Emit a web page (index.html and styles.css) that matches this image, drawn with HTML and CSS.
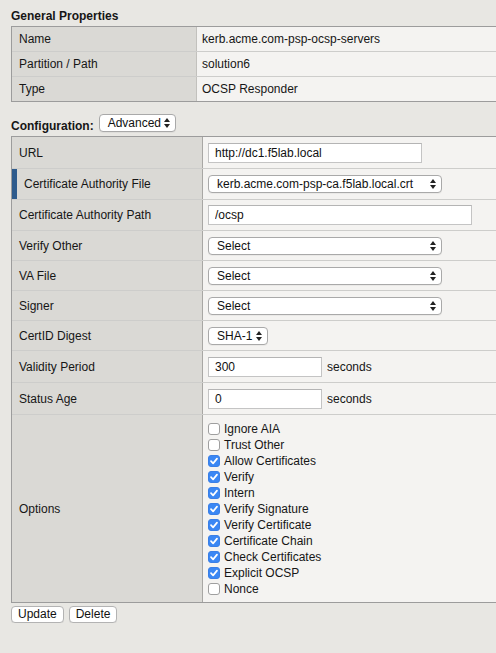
FILE: index.html
```html
<!DOCTYPE html>
<html>
<head>
<meta charset="utf-8">
<link rel="stylesheet" href="styles.css">
</head>
<body>
<div class="page">
  <h2 class="title">General Properties</h2>
  <div class="props">
    <div class="prow"><div class="plabel">Name</div><div class="pval">kerb.acme.com-psp-ocsp-servers</div></div>
    <div class="prow"><div class="plabel">Partition / Path</div><div class="pval">solution6</div></div>
    <div class="prow"><div class="plabel">Type</div><div class="pval">OCSP Responder</div></div>
  </div>

  <div class="config">
    <span class="config-label">Configuration:</span>
    <div class="select sel-adv"><span class="sel-text">Advanced</span><svg class="arr" width="6" height="10" viewBox="0 0 6 10"><polygon points="0,4 3,0 6,4"/><polygon points="0,6 3,10 6,6"/></svg></div>
  </div>

  <div class="form">
    <div class="frow h-url">
      <div class="flabel">URL</div>
      <div class="fval"><input class="input w-url" type="text" value="http://dc1.f5lab.local"></div>
    </div>
    <div class="frow h-30">
      <div class="flabel marked">Certificate Authority File</div>
      <div class="fval"><div class="select w-sel"><span class="sel-text">kerb.acme.com-psp-ca.f5lab.local.crt</span><svg class="arr" width="6" height="10" viewBox="0 0 6 10"><polygon points="0,4 3,0 6,4"/><polygon points="0,6 3,10 6,6"/></svg></div></div>
    </div>
    <div class="frow h-30">
      <div class="flabel">Certificate Authority Path</div>
      <div class="fval"><input class="input w-path" type="text" value="/ocsp"></div>
    </div>
    <div class="frow h-29">
      <div class="flabel">Verify Other</div>
      <div class="fval"><div class="select w-sel"><span class="sel-text">Select</span><svg class="arr" width="6" height="10" viewBox="0 0 6 10"><polygon points="0,4 3,0 6,4"/><polygon points="0,6 3,10 6,6"/></svg></div></div>
    </div>
    <div class="frow h-29">
      <div class="flabel">VA File</div>
      <div class="fval"><div class="select w-sel"><span class="sel-text">Select</span><svg class="arr" width="6" height="10" viewBox="0 0 6 10"><polygon points="0,4 3,0 6,4"/><polygon points="0,6 3,10 6,6"/></svg></div></div>
    </div>
    <div class="frow h-29">
      <div class="flabel">Signer</div>
      <div class="fval"><div class="select w-sel"><span class="sel-text">Select</span><svg class="arr" width="6" height="10" viewBox="0 0 6 10"><polygon points="0,4 3,0 6,4"/><polygon points="0,6 3,10 6,6"/></svg></div></div>
    </div>
    <div class="frow h-29">
      <div class="flabel">CertID Digest</div>
      <div class="fval"><div class="select w-sha"><span class="sel-text">SHA-1</span><svg class="arr" width="6" height="10" viewBox="0 0 6 10"><polygon points="0,4 3,0 6,4"/><polygon points="0,6 3,10 6,6"/></svg></div></div>
    </div>
    <div class="frow h-31">
      <div class="flabel">Validity Period</div>
      <div class="fval"><input class="input w-num" type="text" value="300"><span class="unit">seconds</span></div>
    </div>
    <div class="frow h-31">
      <div class="flabel">Status Age</div>
      <div class="fval"><input class="input w-num" type="text" value="0"><span class="unit">seconds</span></div>
    </div>
    <div class="frow h-opts">
      <div class="flabel">Options</div>
      <div class="fval">
        <div class="checks">
          <div class="check"><span class="cb"></span>Ignore AIA</div>
          <div class="check"><span class="cb"></span>Trust Other</div>
          <div class="check"><span class="cb on"><svg width="12" height="12" viewBox="0 0 12 12"><path d="M3 6.2 L5.1 8.4 L9 3.6"/></svg></span>Allow Certificates</div>
          <div class="check"><span class="cb on"><svg width="12" height="12" viewBox="0 0 12 12"><path d="M3 6.2 L5.1 8.4 L9 3.6"/></svg></span>Verify</div>
          <div class="check"><span class="cb on"><svg width="12" height="12" viewBox="0 0 12 12"><path d="M3 6.2 L5.1 8.4 L9 3.6"/></svg></span>Intern</div>
          <div class="check"><span class="cb on"><svg width="12" height="12" viewBox="0 0 12 12"><path d="M3 6.2 L5.1 8.4 L9 3.6"/></svg></span>Verify Signature</div>
          <div class="check"><span class="cb on"><svg width="12" height="12" viewBox="0 0 12 12"><path d="M3 6.2 L5.1 8.4 L9 3.6"/></svg></span>Verify Certificate</div>
          <div class="check"><span class="cb on"><svg width="12" height="12" viewBox="0 0 12 12"><path d="M3 6.2 L5.1 8.4 L9 3.6"/></svg></span>Certificate Chain</div>
          <div class="check"><span class="cb on"><svg width="12" height="12" viewBox="0 0 12 12"><path d="M3 6.2 L5.1 8.4 L9 3.6"/></svg></span>Check Certificates</div>
          <div class="check"><span class="cb on"><svg width="12" height="12" viewBox="0 0 12 12"><path d="M3 6.2 L5.1 8.4 L9 3.6"/></svg></span>Explicit OCSP</div>
          <div class="check"><span class="cb"></span>Nonce</div>
        </div>
      </div>
    </div>
  </div>

  <div class="buttons">
    <button class="btn">Update</button>
    <button class="btn">Delete</button>
  </div>
</div>
</body>
</html>
```

FILE: styles.css
```css
html, body {
  margin: 0;
  padding: 0;
  background: #e8e7e3;
  overflow: hidden;
}
body {
  font-family: "Liberation Sans", Arial, sans-serif;
  font-size: 12px;
  color: #161616;
}
.page {
  padding-left: 11px;
}
.title {
  margin: 9px 0 3px 0;
  font-size: 12px;
  line-height: 14px;
  font-weight: bold;
}
.props {
  border: 1px solid #9c9c9c;
  border-right: none;
}
.prow {
  display: flex;
  height: 24px;
}
.prow + .prow {
  border-top: 1px solid #cdcdcb;
}
.plabel {
  width: 185px;
  background: #dad9d5;
  padding-left: 7px;
  box-sizing: border-box;
  display: flex;
  align-items: center;
  border-right: 1px solid #c2c1bd;
}
.pval {
  flex: 1;
  background: #f4f3f1;
  padding-left: 5px;
  display: flex;
  align-items: center;
}
.config {
  display: flex;
  align-items: flex-end;
  margin: 12px 0 4px 0;
  height: 18px;
}
.config-label {
  font-weight: bold;
  line-height: 14px;
  margin-right: 5px;
  margin-bottom: -1px;
}
.select {
  box-sizing: border-box;
  height: 18px;
  background: #fff;
  border: 1px solid #a9a9a9;
  border-radius: 4px;
  display: flex;
  align-items: center;
  justify-content: space-between;
  padding: 0 5px 0 8px;
  box-shadow: 0 1px 0 rgba(0,0,0,0.04);
  color: #111;
}
.sel-text {
  line-height: 16px;
  white-space: nowrap;
}
.arr {
  fill: #222;
  flex: none;
}
.sel-adv { width: 77px; }
.w-sel { width: 234px; }
.w-sha { width: 60px; }
.form {
  border: 1px solid #9c9c9c;
  border-right: none;
}
.frow {
  display: flex;
}
.frow + .frow {
  border-top: 1px solid #cdcdcb;
}
.h-url { height: 31px; }
.h-30 { height: 30px; }
.h-29 { height: 29px; }
.h-31 { height: 31px; }
.h-opts { height: 187px; }
.flabel {
  width: 191px;
  box-sizing: border-box;
  background: #dad9d5;
  padding-left: 7px;
  display: flex;
  align-items: center;
  border-right: 1px solid #a8a7a4;
}
.flabel.marked {
  border-left: 5px solid #2e5b8c;
  padding-left: 7px;
}
.fval {
  flex: 1;
  background: #f4f3f1;
  padding-left: 5px;
  display: flex;
  align-items: center;
}
.input {
  box-sizing: border-box;
  height: 20px;
  border: 1px solid #c4c4c4;
  border-top-color: #b4b4b4;
  background: #fff;
  font-family: "Liberation Sans", Arial, sans-serif;
  font-size: 12px;
  color: #111;
  padding: 0 6px;
  margin: 0;
  outline: none;
}
.w-url { width: 214px; }
.w-path { width: 264px; }
.w-num { width: 114px; }
.unit {
  margin-left: 5px;
}
.checks {
  display: flex;
  flex-direction: column;
}
.check {
  display: flex;
  align-items: center;
  height: 16px;
  line-height: 16px;
  white-space: nowrap;
}
.cb {
  box-sizing: border-box;
  width: 12px;
  height: 12px;
  border: 1px solid #9f9f9f;
  border-radius: 3px;
  background: #fff;
  margin-right: 4px;
  flex: none;
  display: flex;
  align-items: center;
  justify-content: center;
}
.cb.on {
  background: #3a87f4;
  border-color: #3a7fe6;
}
.cb svg {
  flex: none;
}
.cb path {
  fill: none;
  stroke: #fff;
  stroke-width: 1.7;
  stroke-linecap: round;
  stroke-linejoin: round;
}
.buttons {
  display: flex;
  gap: 5px;
  margin-top: 3px;
}
.btn {
  height: 17px;
  padding: 0 6px;
  border: 1px solid #b3b3b3;
  border-radius: 4px;
  background: #fff;
  font-family: "Liberation Sans", Arial, sans-serif;
  font-size: 12px;
  line-height: 15px;
  color: #111;
  box-shadow: 0 1px 0 rgba(0,0,0,0.05);
}
```
